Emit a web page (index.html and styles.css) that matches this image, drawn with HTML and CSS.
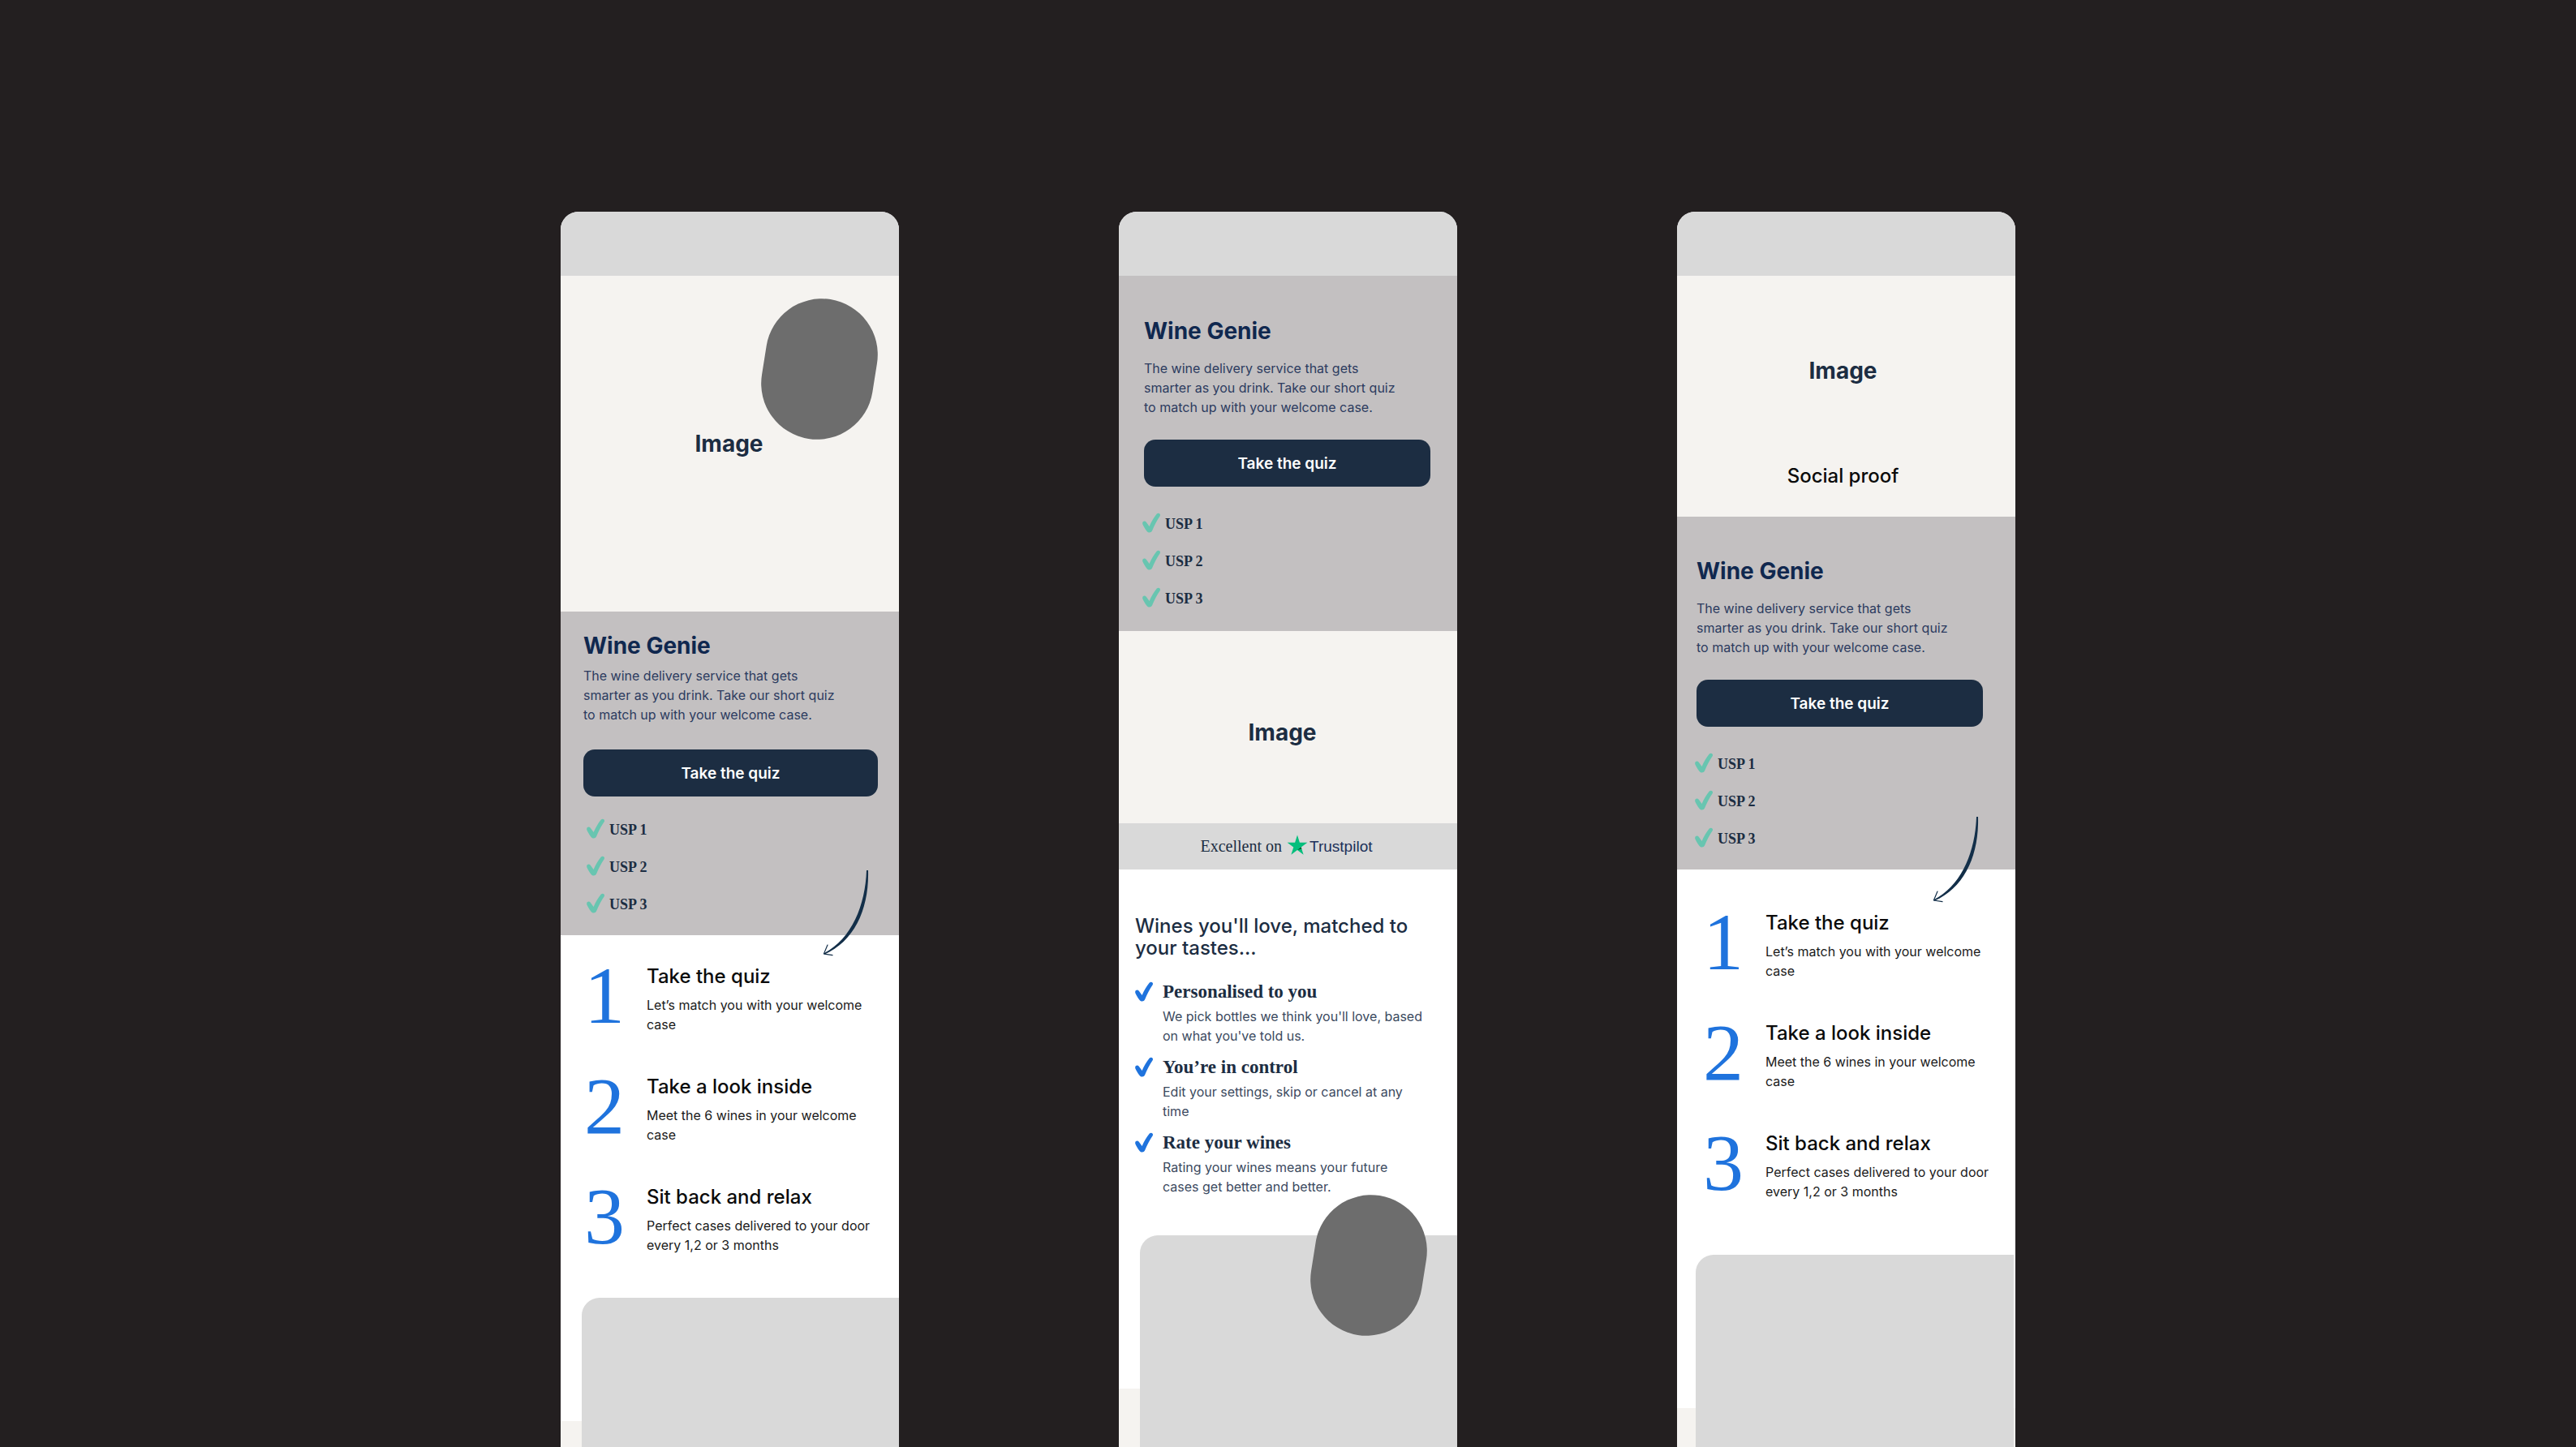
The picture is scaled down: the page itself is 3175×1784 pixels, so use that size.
FILE: index.html
```html
<!DOCTYPE html>
<html lang="en">
<head>
  <meta charset="utf-8">
  <meta name="viewport" content="width=device-width, initial-scale=1">
  <title>Wine Genie – landing page wireframes</title>
  <link rel="stylesheet" href="styles.css">
</head>
<body>
  <svg class="defs" aria-hidden="true">
    <symbol id="tick" viewBox="0 0 28 30">
      <path d="M0.2 13.4C0.8 11.4 3.2 10.8 4.6 12.6L8.6 18C11 12.6 14.2 7 17.8 2.6C19.6 0.8 23 2.2 21.8 5C17.8 10.8 14.4 17.4 12 23.6C11 26 7.2 26 5.8 24.2C3.4 21.2 1.4 18 0.2 15Z" fill="currentColor"/>
    </symbol>
    <symbol id="arrow" viewBox="0 0 57 108">
      <path d="M54 1C52.6 44 35.6 86 1.5 103.2L2 104.8C39.6 88.4 57.4 48 56 1Z" fill="currentColor"/>
      <path d="M6 93L1.4 104L12 105.6" fill="none" stroke="currentColor" stroke-width="1.2" stroke-linecap="round" stroke-linejoin="round"/>
    </symbol>
  </svg>

  <main class="board">
    <article class="phone phone-a">
      <header class="topbar"></header>
      <section class="picture">
        <h2 class="picture-label">Image</h2>
        <span class="blob"></span>
      </section>
      <section class="hero">
        <h1 class="hero-title">Wine Genie</h1>
        <p class="hero-text">The wine delivery service that gets<br>smarter as you drink. Take our short quiz<br>to match up with your welcome case.</p>
        <button class="cta" type="button">Take the quiz</button>
        <ul class="usps">
          <li class="usp"><svg class="tick"><use href="#tick"/></svg>USP 1</li>
          <li class="usp"><svg class="tick"><use href="#tick"/></svg>USP 2</li>
          <li class="usp"><svg class="tick"><use href="#tick"/></svg>USP 3</li>
        </ul>
      </section>
      <section class="steps">
        <svg class="arrow"><use href="#arrow"/></svg>
        <div class="step">
          <span class="step-number">1</span>
          <div class="step-body">
            <h3 class="step-title">Take the quiz</h3>
            <p class="step-text">Let’s match you with your welcome<br>case</p>
          </div>
        </div>
        <div class="step">
          <span class="step-number">2</span>
          <div class="step-body">
            <h3 class="step-title">Take a look inside</h3>
            <p class="step-text">Meet the 6 wines in your welcome<br>case</p>
          </div>
        </div>
        <div class="step">
          <span class="step-number">3</span>
          <div class="step-body">
            <h3 class="step-title">Sit back and relax</h3>
            <p class="step-text">Perfect cases delivered to your door<br>every 1,2 or 3 months</p>
          </div>
        </div>
      </section>
      <section class="shelf">
        <div class="slab"></div>
      </section>
    </article>

    <article class="phone phone-b">
      <header class="topbar"></header>
      <section class="hero">
        <h1 class="hero-title">Wine Genie</h1>
        <p class="hero-text">The wine delivery service that gets<br>smarter as you drink. Take our short quiz<br>to match up with your welcome case.</p>
        <button class="cta" type="button">Take the quiz</button>
        <ul class="usps">
          <li class="usp"><svg class="tick"><use href="#tick"/></svg>USP 1</li>
          <li class="usp"><svg class="tick"><use href="#tick"/></svg>USP 2</li>
          <li class="usp"><svg class="tick"><use href="#tick"/></svg>USP 3</li>
        </ul>
      </section>
      <section class="picture">
        <h2 class="picture-label">Image</h2>
      </section>
      <section class="trust">
        <span class="trust-text">Excellent on</span>
        <svg class="star" viewBox="0 0 26 26" aria-hidden="true">
          <path d="M13 0.5L15.9 9.7H25.4L17.7 15.4L20.6 24.7L13 19L5.4 24.7L8.3 15.4L0.6 9.7H10.1Z" fill="#04be7c"/>
          <path d="M18.4 17.4L17.7 15.4L13 19Z" fill="#005128"/>
        </svg>
        <span class="trust-brand">Trustpilot</span>
      </section>
      <section class="features">
        <h2 class="features-title">Wines you'll love, matched to<br>your tastes...</h2>
        <div class="feature">
          <svg class="tick"><use href="#tick"/></svg>
          <div class="feature-body">
            <h3 class="feature-name">Personalised to you</h3>
            <p class="feature-text">We pick bottles we think you'll love, based<br>on what you've told us.</p>
          </div>
        </div>
        <div class="feature">
          <svg class="tick"><use href="#tick"/></svg>
          <div class="feature-body">
            <h3 class="feature-name">You’re in control</h3>
            <p class="feature-text">Edit your settings, skip or cancel at any<br>time</p>
          </div>
        </div>
        <div class="feature">
          <svg class="tick"><use href="#tick"/></svg>
          <div class="feature-body">
            <h3 class="feature-name">Rate your wines</h3>
            <p class="feature-text">Rating your wines means your future<br>cases get better and better.</p>
          </div>
        </div>
      </section>
      <section class="shelf">
        <div class="slab"></div>
        <span class="blob"></span>
      </section>
    </article>

    <article class="phone phone-c">
      <header class="topbar"></header>
      <section class="picture">
        <h2 class="picture-label">Image</h2>
        <h3 class="picture-note">Social proof</h3>
      </section>
      <section class="hero">
        <h1 class="hero-title">Wine Genie</h1>
        <p class="hero-text">The wine delivery service that gets<br>smarter as you drink. Take our short quiz<br>to match up with your welcome case.</p>
        <button class="cta" type="button">Take the quiz</button>
        <ul class="usps">
          <li class="usp"><svg class="tick"><use href="#tick"/></svg>USP 1</li>
          <li class="usp"><svg class="tick"><use href="#tick"/></svg>USP 2</li>
          <li class="usp"><svg class="tick"><use href="#tick"/></svg>USP 3</li>
        </ul>
      </section>
      <section class="steps">
        <svg class="arrow"><use href="#arrow"/></svg>
        <div class="step">
          <span class="step-number">1</span>
          <div class="step-body">
            <h3 class="step-title">Take the quiz</h3>
            <p class="step-text">Let’s match you with your welcome<br>case</p>
          </div>
        </div>
        <div class="step">
          <span class="step-number">2</span>
          <div class="step-body">
            <h3 class="step-title">Take a look inside</h3>
            <p class="step-text">Meet the 6 wines in your welcome<br>case</p>
          </div>
        </div>
        <div class="step">
          <span class="step-number">3</span>
          <div class="step-body">
            <h3 class="step-title">Sit back and relax</h3>
            <p class="step-text">Perfect cases delivered to your door<br>every 1,2 or 3 months</p>
          </div>
        </div>
      </section>
      <section class="shelf">
        <div class="slab"></div>
      </section>
    </article>
  </main>
</body>
</html>
```
FILE: styles.css
```css
:root {
  --ink: #1c2d42;
  --paper: #f5f3f0;
  --grey: #d9d9d9;
  --sans: Inter, "Liberation Sans", sans-serif;
  --serif: "Liberation Serif", serif;
}

* {
  box-sizing: border-box;
}

body {
  margin: 0;
  background: #231f20;
  color: var(--ink);
  font-family: var(--sans);
}

h1,
h2,
h3,
p,
ul {
  margin: 0;
  padding: 0;
}

.defs {
  display: none;
}

.board {
  display: flex;
  justify-content: center;
  gap: 271px;
  min-height: 100vh;
  padding-top: 261px;
}

.phone {
  flex: 0 1 417px;
  display: flex;
  flex-direction: column;
  overflow: hidden;
  border-radius: 22px 22px 0 0;
  background: #fff;
}

.topbar {
  height: 79px;
  background: var(--grey);
}

/* Picture placeholder */

.picture {
  position: relative;
  display: flex;
  flex-direction: column;
  align-items: center;
  justify-content: center;
  background: var(--paper);
}

.picture-label {
  font-size: 28px;
  font-weight: 700;
  line-height: 32px;
}

.picture-note {
  color: #0b0b0b;
  font-size: 24px;
  font-weight: 500;
  line-height: 28px;
}

.phone-a .picture {
  min-height: 414px;
  padding-right: 2px;
}

.phone-b .picture {
  min-height: 237px;
  padding: 12px 14px 0 0;
}

.phone-c .picture {
  gap: 100px;
  padding: 101px 8px 36px 0;
}

.blob {
  position: absolute;
  width: 138px;
  height: 174px;
  border-radius: 69px;
  background: #6d6d6d;
  transform: rotate(9deg);
}

.phone-a .blob {
  top: 28px;
  right: 29px;
}

.phone-b .blob {
  top: -50px;
  right: 40px;
}

/* Hero */

.hero {
  display: flex;
  flex-direction: column;
  background: #c3c0c1;
}

.phone-a .hero {
  padding: 26px 26px 23px 28px;
}

.phone-b .hero {
  padding: 52px 33px 25px 31px;
}

.phone-c .hero {
  padding: 51px 40px 23px 24px;
}

.hero-title {
  margin-bottom: 18px;
  color: #10284f;
  font-size: 28px;
  font-weight: 700;
  line-height: 32px;
}

.phone-a .hero-title {
  margin-bottom: 9px;
}

.hero-text {
  margin-bottom: 28px;
  color: #2c3b5f;
  font-size: 16px;
  line-height: 24px;
}

.phone-a .hero-text {
  margin-bottom: 31px;
}

.cta {
  height: 58px;
  border: 0;
  border-radius: 14px;
  background: var(--ink);
  color: #fff;
  font-family: var(--sans);
  font-size: 19px;
  font-weight: 600;
  cursor: pointer;
}

.usps {
  display: flex;
  flex-direction: column;
  gap: 16px;
  margin: 31px 0 0 -2px;
  list-style: none;
}

.phone-a .usps {
  margin: 26px 0 0 4px;
}

.usp {
  display: flex;
  font-family: var(--serif);
  font-size: 18px;
  font-weight: 700;
  line-height: 30px;
}

.tick {
  flex: none;
  width: 28px;
  height: 30px;
  color: #68c5b0;
}

/* Trustpilot strip */

.trust {
  display: flex;
  align-items: center;
  justify-content: center;
  height: 57px;
  padding-right: 4px;
  background: var(--grey);
}

.trust-text {
  font-family: var(--serif);
  font-size: 20px;
}

.star {
  width: 26px;
  height: 26px;
  margin: 0 2px 4px 6px;
}

.trust-brand {
  color: #20305a;
  font-family: "Liberation Sans", sans-serif;
  font-size: 19px;
}

/* Feature list */

.features {
  display: flex;
  flex-direction: column;
  gap: 13px;
  padding: 56px 20px 48px 20px;
}

.features-title {
  margin-bottom: 14px;
  font-size: 24px;
  font-weight: 500;
  line-height: 27px;
}

.feature {
  display: flex;
  gap: 6px;
}

.feature .tick {
  color: #1f73dd;
}

.feature-name {
  margin-bottom: 4px;
  font-family: var(--serif);
  font-size: 23px;
  font-weight: 700;
  line-height: 28px;
}

.feature-text {
  color: #3b4a60;
  font-size: 16px;
  line-height: 24px;
}

/* Numbered steps */

.steps {
  position: relative;
  display: flex;
  flex-direction: column;
  gap: 50px;
}

.phone-a .steps {
  padding: 36px 0 53px 29px;
}

.phone-c .steps {
  padding: 51px 0 66px 32px;
}

.arrow {
  position: absolute;
  width: 57px;
  height: 108px;
  color: #132f49;
}

.phone-a .arrow {
  top: -81px;
  right: 37px;
}

.phone-c .arrow {
  top: -66px;
  right: 45px;
}

.step {
  display: flex;
  height: 86px;
}

.step-number {
  flex: none;
  width: 77px;
  color: #1f73dd;
  font-family: var(--serif);
  font-size: 100px;
  line-height: 78px;
}

.step-title {
  margin-bottom: 8px;
  color: #0b0b0b;
  font-size: 24px;
  font-weight: 500;
  line-height: 30px;
}

.step-text {
  color: #1a1a1a;
  font-size: 16px;
  line-height: 24px;
}

/* Bottom shelf: a grey slab over white that turns to paper */

.shelf {
  position: relative;
  flex: 1;
  display: flex;
  padding-left: 26px;
  background: linear-gradient(#fff 189px, var(--paper) 189px);
}

.phone-a .shelf {
  background: linear-gradient(#fff 152px, var(--paper) 152px);
}

.phone-c .shelf {
  padding: 0 2px 0 23px;
}

.slab {
  flex: 1;
  border-top-left-radius: 22px;
  background: var(--grey);
}
```
